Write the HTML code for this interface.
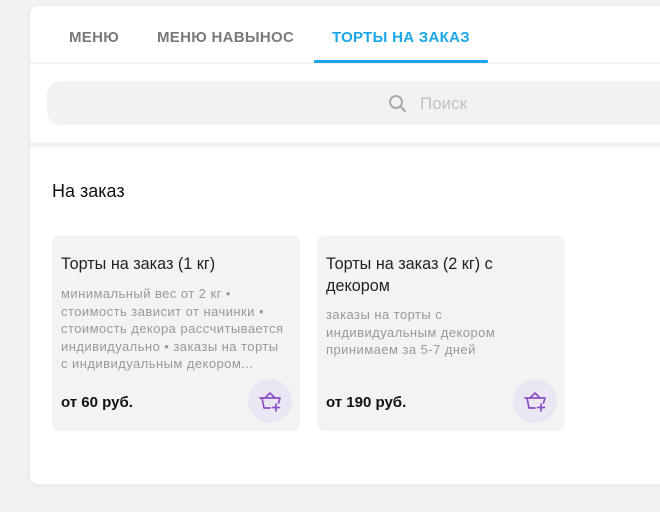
<!DOCTYPE html>
<html><head><meta charset="utf-8"><style>
*{margin:0;padding:0;box-sizing:border-box}
body{width:660px;height:512px;background:#f2f2f2;font-family:"Liberation Sans","DejaVu Sans",sans-serif;position:relative;overflow:hidden}
.main{position:absolute;left:30px;top:6px;width:660px;height:478px;background:#fff;border-radius:8px;box-shadow:0 2px 6px rgba(0,0,0,.05)}
.tab{position:absolute;top:29px;font-size:15px;font-weight:bold;color:#7a7a7a;letter-spacing:.3px}
.ul{position:absolute;left:314px;top:60px;width:174px;height:3px;background:#1aa6e8;border-radius:1px}
.line{position:absolute;left:30px;top:62px;width:630px;height:2px;background:#f2f2f2}
.search{position:absolute;left:47px;top:81px;width:640px;height:44px;background:#f2f2f2;border-radius:14px}
.band{position:absolute;left:30px;top:142px;width:630px;height:5px;background:#f2f2f2}
.ph{position:absolute;left:420px;top:94px;font-size:17px;color:#c2c2c2}
h2{position:absolute;left:52px;top:181px;font-size:18px;font-weight:normal;color:#111}
.card{position:absolute;top:235px;width:248px;height:196px;background:#f3f3f3;border-radius:8px}
.t{position:absolute;left:9px;top:18px;width:235px;font-size:16.2px;line-height:22px;color:#222;white-space:nowrap}
.d{position:absolute;left:9px;width:240px;font-size:13px;line-height:17.6px;color:#999;letter-spacing:.45px;white-space:nowrap}
.p{position:absolute;left:9px;top:159px;font-size:15px;font-weight:bold;color:#111}
.b{position:absolute;left:196px;top:144px;width:44px;height:44px;border-radius:50%;background:#ebe6f3}
.b svg{position:absolute;left:10px;top:10px}
</style></head><body>
<div class="main"></div>
<div class="tab" style="left:69px">МЕНЮ</div>
<div class="tab" style="left:157px">МЕНЮ НАВЫНОС</div>
<div class="tab" style="left:332px;color:#1aa6e8">ТОРТЫ НА ЗАКАЗ</div>
<div class="line"></div>
<div class="ul"></div>
<div class="search"></div>
<svg style="position:absolute;left:388px;top:94px" width="20" height="20" viewBox="0 0 20 20"><circle cx="8" cy="8" r="6" fill="none" stroke="#aaa" stroke-width="2"/><path d="M12.5 12.5L17 17" stroke="#aaa" stroke-width="2.2" stroke-linecap="round"/></svg>
<div class="ph">Поиск</div>
<div class="band"></div>
<h2>На заказ</h2>
<div class="card" style="left:52px">
<div class="t">Торты на заказ (1 кг)</div>
<div class="d" style="top:50px">минимальный вес от 2 кг •<br>стоимость зависит от начинки •<br>стоимость декора рассчитывается<br>индивидуально • заказы на торты<br>с индивидуальным декором...</div>
<div class="p">от 60 руб.</div>
<div class="b"><svg width="24" height="24" viewBox="0 0 24 24" fill="none" stroke="#8a4fc4" stroke-width="1.7" stroke-linecap="round" stroke-linejoin="round"><path d="M2 9h20L20.5 14M7 9l5-5 5 5M4 9l2 10h6M18 15v7M14.5 18.5h7"/></svg></div>
</div>
<div class="card" style="left:317px">
<div class="t">Торты на заказ (2 кг) с<br>декором</div>
<div class="d" style="top:71px">заказы на торты с<br>индивидуальным декором<br>принимаем за 5-7 дней</div>
<div class="p">от 190 руб.</div>
<div class="b"><svg width="24" height="24" viewBox="0 0 24 24" fill="none" stroke="#8a4fc4" stroke-width="1.7" stroke-linecap="round" stroke-linejoin="round"><path d="M2 9h20L20.5 14M7 9l5-5 5 5M4 9l2 10h6M18 15v7M14.5 18.5h7"/></svg></div>
</div>
</body></html>
